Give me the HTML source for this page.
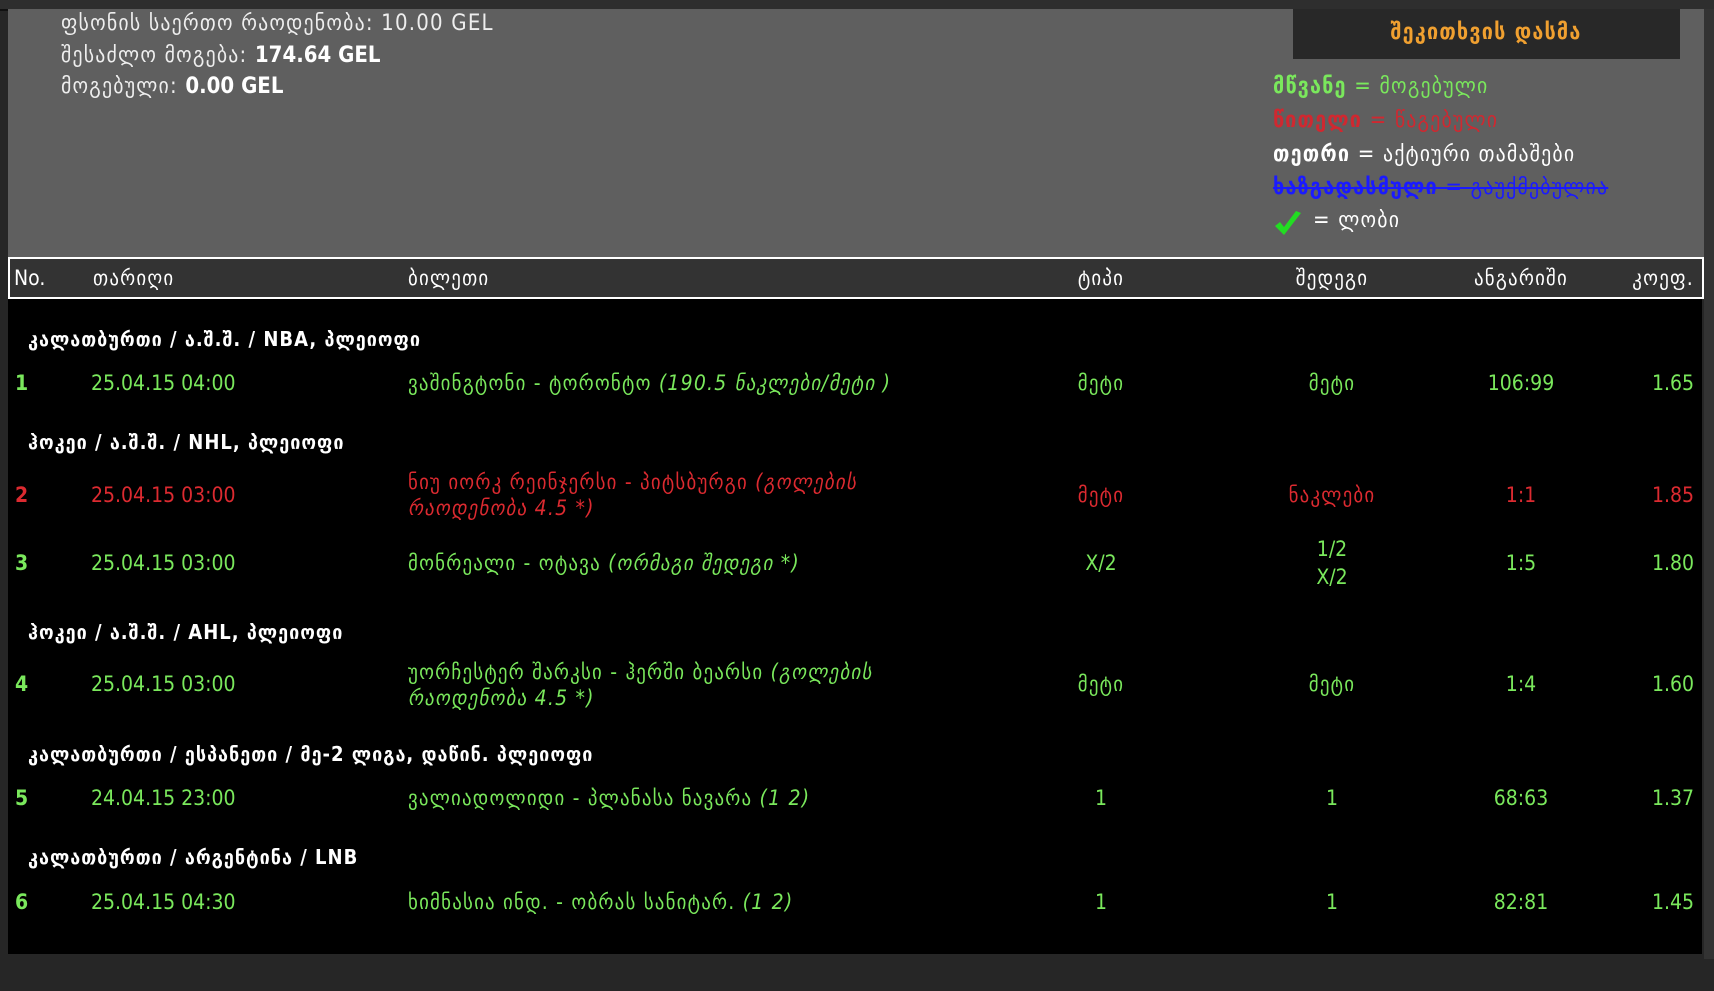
<!DOCTYPE html>
<html><head><meta charset="utf-8"><style>
body{margin:0;width:1714px;height:991px;background:#262626;overflow:hidden;position:relative;font-family:"Liberation Sans Narrow","DejaVu Sans Condensed","Liberation Sans",sans-serif;}
div,span{position:absolute;white-space:nowrap;}
.g{color:#7ae85c}.r{color:#dc2a30}.w{color:#fff}
.t{font-size:21px;line-height:24px}
.c{transform:translateX(-50%)}
.rt{transform:translateX(-100%)}
.grp{font-size:20px;font-weight:bold;color:#fff;left:28px;letter-spacing:1px}
.k{letter-spacing:1.2px}
i{font-style:italic}
</style></head><body>
<div style="left:0;top:0;width:1714px;height:9px;background:#2e2e2e;border-bottom:2px solid #111"></div>
<div style="left:8px;top:9px;width:1696px;height:248px;background:#5f5f5f"></div>
<div style="left:1704px;top:9px;width:10px;height:950px;background:#333"></div>
<div class="t k" style="left:61px;top:12px;color:#eee;font-size:22px">ფსონის საერთო რაოდენობა: 10.00 GEL</div>
<div class="t k" style="left:61px;top:44px;color:#eee;font-size:22px">შესაძლო მოგება: <b style="color:#fff;letter-spacing:0">174.64 GEL</b></div>
<div class="t k" style="left:61px;top:75px;color:#eee;font-size:22px">მოგებული: <b style="color:#fff;letter-spacing:0">0.00 GEL</b></div>
<div style="left:1293px;top:9px;width:387px;height:50px;background:#282828"></div>
<div class="c k" style="left:1486px;top:20px;font-size:22px;font-weight:bold;color:#f0a030">შეკითხვის დასმა</div>
<div class="k" style="left:1273px;top:74px;font-size:22px;color:#7ae85c"><b>მწვანე</b> = მოგებული</div>
<div class="k" style="left:1273px;top:108px;font-size:22px;color:#d02830"><b>წითელი</b> = წაგებული</div>
<div class="k" style="left:1273px;top:142px;font-size:22px;color:#fff"><b>თეთრი</b> = აქტიური თამაშები</div>
<div class="k" style="left:1273px;top:175px;font-size:22px;color:#1a1aff;text-decoration:line-through"><b>ხაზგადასმული</b> = გაუქმებულია</div>
<svg style="position:absolute;left:1272px;top:209px" width="32" height="30"><path d="M3 17 L12 26 L29 4 L24 2 L12 18 L8 13Z" fill="#22dd22"/></svg>
<div class="k" style="left:1313px;top:208px;font-size:22px;color:#fff">= ლობი</div>
<div style="left:8px;top:257px;width:1692px;height:38px;background:#333;border:2px solid #fff"></div>
<div style="left:8px;top:299px;width:1694px;height:655px;background:#000"></div>
<div class="t w" style="left:14px;top:266px">No.</div>
<div class="t w k" style="left:93px;top:266px">თარიღი</div>
<div class="t w k" style="left:408px;top:266px">ბილეთი</div>
<div class="t w c k" style="left:1101px;top:266px">ტიპი</div>
<div class="t w c k" style="left:1332px;top:266px">შედეგი</div>
<div class="t w c k" style="left:1521px;top:266px">ანგარიში</div>
<div class="t w rt k" style="left:1694px;top:266px">კოეფ.</div>

<div class="grp" style="top:327px">კალათბურთი / ა.შ.შ. / NBA, პლეიოფი</div>
<div class="t g" style="left:15px;top:371px"><b>1</b></div>
<div class="t g" style="left:91px;top:371px">25.04.15 04:00</div>
<div class="t g k" style="left:408px;top:371px">ვაშინგტონი - ტორონტო <i>(190.5 ნაკლები/მეტი )</i></div>
<div class="t g c k" style="left:1101px;top:371px">მეტი</div>
<div class="t g c k" style="left:1332px;top:371px">მეტი</div>
<div class="t g c" style="left:1521px;top:371px">106:99</div>
<div class="t g rt" style="left:1694px;top:371px">1.65</div>

<div class="grp" style="top:430px">ჰოკეი / ა.შ.შ. / NHL, პლეიოფი</div>
<div class="t r" style="left:15px;top:483px"><b>2</b></div>
<div class="t r" style="left:91px;top:483px">25.04.15 03:00</div>
<div class="t r k" style="left:408px;top:470px">ნიუ იორკ რეინჯერსი - პიტსბურგი <i>(გოლების</i></div>
<div class="t r k" style="left:408px;top:496px"><i>რაოდენობა 4.5 *)</i></div>
<div class="t r c k" style="left:1101px;top:483px">მეტი</div>
<div class="t r c k" style="left:1332px;top:483px">ნაკლები</div>
<div class="t r c" style="left:1521px;top:483px">1:1</div>
<div class="t r rt" style="left:1694px;top:483px">1.85</div>

<div class="t g" style="left:15px;top:551px"><b>3</b></div>
<div class="t g" style="left:91px;top:551px">25.04.15 03:00</div>
<div class="t g k" style="left:408px;top:551px">მონრეალი - ოტავა <i>(ორმაგი შედეგი *)</i></div>
<div class="t g c" style="left:1101px;top:551px">X/2</div>
<div class="t g c" style="left:1332px;top:537px">1/2</div>
<div class="t g c" style="left:1332px;top:565px">X/2</div>
<div class="t g c" style="left:1521px;top:551px">1:5</div>
<div class="t g rt" style="left:1694px;top:551px">1.80</div>

<div class="grp" style="top:620px">ჰოკეი / ა.შ.შ. / AHL, პლეიოფი</div>
<div class="t g" style="left:15px;top:672px"><b>4</b></div>
<div class="t g" style="left:91px;top:672px">25.04.15 03:00</div>
<div class="t g k" style="left:408px;top:660px">უორჩესტერ შარკსი - ჰერში ბეარსი <i>(გოლების</i></div>
<div class="t g k" style="left:408px;top:686px"><i>რაოდენობა 4.5 *)</i></div>
<div class="t g c k" style="left:1101px;top:672px">მეტი</div>
<div class="t g c k" style="left:1332px;top:672px">მეტი</div>
<div class="t g c" style="left:1521px;top:672px">1:4</div>
<div class="t g rt" style="left:1694px;top:672px">1.60</div>

<div class="grp" style="top:742px">კალათბურთი / ესპანეთი / მე-2 ლიგა, დაწინ. პლეიოფი</div>
<div class="t g" style="left:15px;top:786px"><b>5</b></div>
<div class="t g" style="left:91px;top:786px">24.04.15 23:00</div>
<div class="t g k" style="left:408px;top:786px">ვალიადოლიდი - პლანასა ნავარა <i>(1 2)</i></div>
<div class="t g c" style="left:1101px;top:786px">1</div>
<div class="t g c" style="left:1332px;top:786px">1</div>
<div class="t g c" style="left:1521px;top:786px">68:63</div>
<div class="t g rt" style="left:1694px;top:786px">1.37</div>

<div class="grp" style="top:845px">კალათბურთი / არგენტინა / LNB</div>
<div class="t g" style="left:15px;top:890px"><b>6</b></div>
<div class="t g" style="left:91px;top:890px">25.04.15 04:30</div>
<div class="t g k" style="left:408px;top:890px">ხიმნასია ინდ. - ობრას სანიტარ. <i>(1 2)</i></div>
<div class="t g c" style="left:1101px;top:890px">1</div>
<div class="t g c" style="left:1332px;top:890px">1</div>
<div class="t g c" style="left:1521px;top:890px">82:81</div>
<div class="t g rt" style="left:1694px;top:890px">1.45</div>
</body></html>
